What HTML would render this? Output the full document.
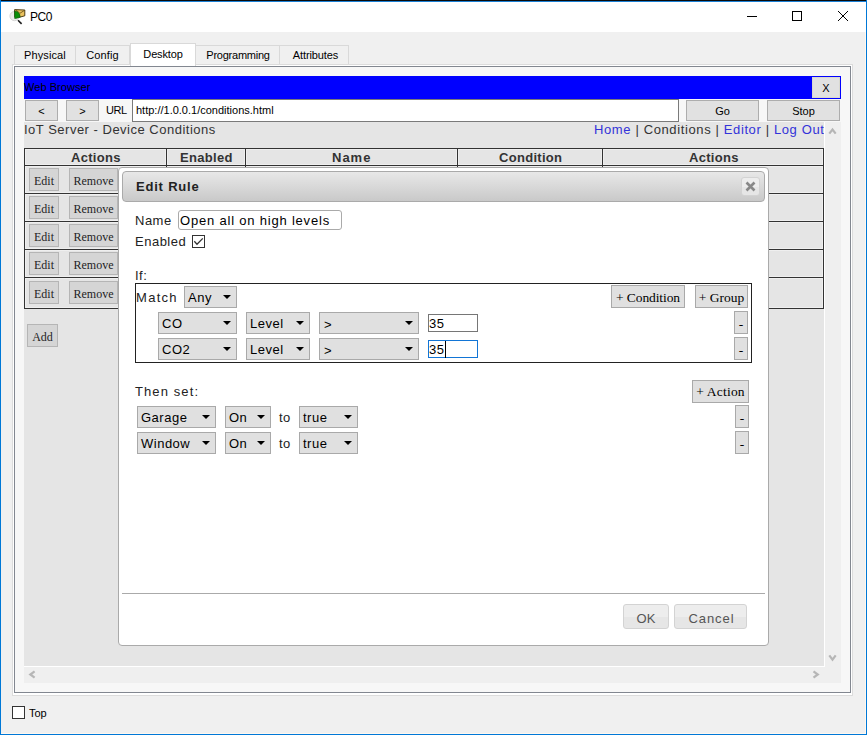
<!DOCTYPE html>
<html><head><meta charset="utf-8">
<style>
*{margin:0;padding:0;box-sizing:border-box}
html,body{width:867px;height:735px;overflow:hidden;background:#f0f0f0}
body{position:relative;font-family:"Liberation Sans",sans-serif;color:#000}
.a{position:absolute}
.t{position:absolute;white-space:nowrap;line-height:1}
.tab{position:absolute;top:45px;height:20px;border:1px solid #d9d9d9;border-bottom:none;background:#f0f0f0;font-size:11px;line-height:18px;text-align:center;letter-spacing:0.1px}
.wbtn{position:absolute;background:#e1e1e1;border:1px solid #adadad;font-size:11px;text-align:center;line-height:19px}
.ebtn{position:absolute;background:#d5d5d5;border:1px solid #b5b5b5;font-family:"Liberation Serif",serif;font-size:12px;text-align:center;color:#1e1e1e}
.sel{position:absolute;background:#e0e0e0;border:1px solid #a9a9a9;font-size:13px;color:#000}
.sel span{position:absolute;left:3px;top:3px;line-height:16px;letter-spacing:0.5px}
.sel i{position:absolute;right:5px;top:8px;width:0;height:0;border-left:4px solid transparent;border-right:4px solid transparent;border-top:4px solid #000}
.pbtn{position:absolute;background:#e0e0e0;border:1px solid #a9a9a9;font-family:"Liberation Serif",serif;font-size:13.5px;color:#000;text-align:center}
.hdr{font-size:13px;font-weight:bold;color:#333;letter-spacing:0.3px}
.lbl{position:absolute;font-size:13px;color:#222;white-space:nowrap;line-height:13px}
.uibtn{position:absolute;border:1px solid #d3d3d3;border-radius:3px;background:linear-gradient(#ededed 0,#ededed 50%,#e6e6e6 50%,#e6e6e6 100%);color:#555;font-size:13px;text-align:center}
</style></head><body>
<!-- window frame -->
<div class="a" style="left:0;top:0;width:867px;height:1px;background:#0a0a0a"></div>
<div class="a" style="left:0;top:1px;width:867px;height:1px;background:#1a7fd4"></div>
<div class="a" style="left:0;top:0;width:1px;height:735px;background:#0078d7"></div>
<div class="a" style="left:866px;top:0;width:1px;height:735px;background:#0078d7"></div>
<div class="a" style="left:0;top:734px;width:867px;height:1px;background:#0078d7"></div>
<div class="a" style="left:1px;top:2px;width:865px;height:30px;background:#fff"></div>
<div class="a" style="left:865px;top:32px;width:1px;height:702px;background:#fff8f0"></div>
<div class="a" style="left:1px;top:733px;width:865px;height:1px;background:#fff8f0"></div>

<!-- icon -->
<svg class="a" style="left:5px;top:5px" width="22" height="22" viewBox="4.4 4.5 22 22">
  <circle cx="13.9" cy="15.6" r="4.6" fill="#ededed" stroke="#d2d2d2" stroke-width="0.9"/>
  <line x1="17.4" y1="19.7" x2="21" y2="23.4" stroke="#1e1e1e" stroke-width="1.6"/>
  <path d="M14 9.1 L24.2 9.5 L24.2 15.3 L19.4 16.6 L14.3 16.6 Z" fill="#ebc35f" stroke="#3d2e08" stroke-width="0.9"/>
  <path d="M15.5 9.6 L19.3 12.8 L23.8 9.9" fill="none" stroke="#5e4712" stroke-width="0.8"/>
  <path d="M14 10.4 L16.8 11.3 Q19.7 12.8 19.6 16.8 L15.2 18 L14 17.9 Z" fill="#0a8f0a" stroke="#054a05" stroke-width="0.5"/>
</svg>
<div class="t" style="left:30px;top:11px;font-size:12px;letter-spacing:-0.4px">PC0</div>

<!-- window controls -->
<div class="a" style="left:747px;top:16px;width:10px;height:1px;background:#000"></div>
<div class="a" style="left:792px;top:11px;width:10px;height:10px;border:1px solid #000"></div>
<svg class="a" style="left:837px;top:10px" width="12" height="12" viewBox="0 0 12 12"><path d="M1 1 L11 11 M11 1 L1 11" stroke="#000" stroke-width="1"/></svg>

<!-- tabs -->
<div class="tab" style="left:14px;width:62px">Physical</div>
<div class="tab" style="left:75px;width:55px">Config</div>
<div class="tab" style="left:279px;width:70px;text-indent:3px;letter-spacing:-0.1px">Attributes</div>
<div class="tab" style="left:195px;width:85px;letter-spacing:-0.25px;text-indent:1px">Programming</div>
<div class="tab" style="left:130px;top:43px;width:66px;height:23px;background:#fff;line-height:21px;letter-spacing:-0.15px;z-index:2">Desktop</div>

<!-- panel -->
<div class="a" style="left:12px;top:64px;width:841px;height:632px;border:1px solid #dcdcdc;background:#fff"></div>
<div class="a" style="left:14px;top:66px;width:837px;height:627px;border:1px solid #828790;background:#f7f7f7"></div>

<!-- browser title -->
<div class="a" style="left:24px;top:76px;width:817px;height:23px;background:#0000ff"></div>
<div class="t" style="left:24px;top:82px;font-size:11px;letter-spacing:0.05px">Web Browser</div>
<div class="wbtn" style="left:812px;top:77px;width:28px;height:21px;border-color:#d9d9cf;font-size:11px;line-height:21px">X</div>

<!-- nav row -->
<div class="wbtn" style="left:25px;top:100px;width:33px;height:21px;line-height:21px">&lt;</div>
<div class="wbtn" style="left:66px;top:100px;width:33px;height:21px;line-height:21px">&gt;</div>
<div class="t" style="left:106px;top:105px;font-size:11px;letter-spacing:-0.5px">URL</div>
<div class="a" style="left:132px;top:99px;width:547px;height:23px;background:#fff;border:1px solid #7a7a7a"></div>
<div class="t" style="left:136px;top:105px;font-size:11px">http://1.0.0.1/conditions.html</div>
<div class="wbtn" style="left:686px;top:100px;width:73px;height:21px;line-height:21px">Go</div>
<div class="wbtn" style="left:767px;top:100px;width:73px;height:21px;line-height:21px">Stop</div>

<!-- page content -->
<div class="a" style="left:24px;top:122px;width:800px;height:544px;background:#e5e5e5;overflow:hidden">
</div>

<!-- page header -->
<div class="t" style="left:24px;top:123px;font-size:13px;color:#333;letter-spacing:0.5px">IoT Server - Device Conditions</div>
<div class="t" style="left:594px;top:123px;font-size:13px;color:#333;letter-spacing:0.62px"><span style="color:#3333d9">Home</span> | Conditions | <span style="color:#3333d9">Editor</span> | <span style="color:#3333d9">Log Out</span></div>

<!-- table light lines -->
<div class="a" style="left:25px;top:149px;width:141px;height:16px;border:1px solid #efefef"></div>
<div class="a" style="left:167px;top:149px;width:78px;height:16px;border:1px solid #efefef"></div>
<div class="a" style="left:246px;top:149px;width:211px;height:16px;border:1px solid #efefef"></div>
<div class="a" style="left:458px;top:149px;width:144px;height:16px;border:1px solid #efefef"></div>
<div class="a" style="left:603px;top:149px;width:220px;height:16px;border:1px solid #efefef"></div>
<div class="a" style="left:25px;top:166px;width:798px;height:27px;border:1px solid #efefef"></div>
<div class="a" style="left:25px;top:194px;width:798px;height:27px;border:1px solid #efefef"></div>
<div class="a" style="left:25px;top:222px;width:798px;height:27px;border:1px solid #efefef"></div>
<div class="a" style="left:25px;top:250px;width:798px;height:27px;border:1px solid #efefef"></div>
<div class="a" style="left:25px;top:278px;width:798px;height:30px;border:1px solid #efefef"></div>
<!-- table -->
<div class="a" style="left:24px;top:148px;width:800px;height:161px;border:1px solid #333"></div>
<div class="a" style="left:24px;top:165px;width:800px;height:1px;background:#333"></div>
<div class="a" style="left:24px;top:193px;width:800px;height:1px;background:#333"></div>
<div class="a" style="left:24px;top:221px;width:800px;height:1px;background:#333"></div>
<div class="a" style="left:24px;top:249px;width:800px;height:1px;background:#333"></div>
<div class="a" style="left:24px;top:277px;width:800px;height:1px;background:#333"></div>
<div class="a" style="left:166px;top:148px;width:1px;height:19px;background:#333"></div>
<div class="a" style="left:245px;top:148px;width:1px;height:19px;background:#333"></div>
<div class="a" style="left:457px;top:148px;width:1px;height:19px;background:#333"></div>
<div class="a" style="left:602px;top:148px;width:1px;height:19px;background:#333"></div>
<div class="t hdr" style="left:71px;top:151px">Actions</div>
<div class="t hdr" style="left:180px;top:151px">Enabled</div>
<div class="t hdr" style="left:332px;top:151px;letter-spacing:1px">Name</div>
<div class="t hdr" style="left:499px;top:151px">Condition</div>
<div class="t hdr" style="left:689px;top:151px">Actions</div>
<div class="ebtn" style="left:29px;top:168px;width:30px;height:23px;line-height:24px">Edit</div>
<div class="ebtn" style="left:69px;top:168px;width:49px;height:23px;line-height:24px">Remove</div>
<div class="ebtn" style="left:29px;top:196px;width:30px;height:23px;line-height:24px">Edit</div>
<div class="ebtn" style="left:69px;top:196px;width:49px;height:23px;line-height:24px">Remove</div>
<div class="ebtn" style="left:29px;top:224px;width:30px;height:23px;line-height:24px">Edit</div>
<div class="ebtn" style="left:69px;top:224px;width:49px;height:23px;line-height:24px">Remove</div>
<div class="ebtn" style="left:29px;top:252px;width:30px;height:23px;line-height:24px">Edit</div>
<div class="ebtn" style="left:69px;top:252px;width:49px;height:23px;line-height:24px">Remove</div>
<div class="ebtn" style="left:29px;top:281px;width:30px;height:23px;line-height:24px">Edit</div>
<div class="ebtn" style="left:69px;top:281px;width:49px;height:23px;line-height:24px">Remove</div>
<div class="ebtn" style="left:27px;top:324px;width:31px;height:23px;line-height:24px">Add</div>

<!-- dialog -->
<div class="a" style="left:118px;top:167px;width:651px;height:479px;border:1px solid #aaa;border-radius:4px;background:#fff"></div>
<div class="a" style="left:122px;top:171px;width:643px;height:31px;border:1px solid #aaa;border-radius:4px;background:linear-gradient(#e8e8e8,#c9c9c9)"></div>
<div class="t" style="left:136px;top:180px;font-size:13px;font-weight:bold;color:#222;letter-spacing:0.8px">Edit Rule</div>
<div class="a" style="left:741px;top:177px;width:19px;height:19px;border:1px solid #d3d3d3;border-radius:3px;background:linear-gradient(#ededed 50%,#e6e6e6 50%)"></div>
<svg class="a" style="left:745px;top:181px" width="11" height="11" viewBox="0 0 11 11"><path d="M1.5 1.5 L9.5 9.5 M9.5 1.5 L1.5 9.5" stroke="#888" stroke-width="2.6"/></svg>

<div class="lbl" style="left:135px;top:214px;letter-spacing:0.5px">Name</div>
<div class="a" style="left:178px;top:210px;width:164px;height:20px;border:1px solid #aaa;border-radius:3px;background:#fff"></div>
<div class="lbl" style="left:180px;top:214px;color:#000;letter-spacing:0.8px">Open all on high levels</div>
<div class="lbl" style="left:135px;top:235px;letter-spacing:0.5px">Enabled</div>
<div class="a" style="left:192px;top:235px;width:13px;height:13px;border:1px solid #333;background:#fff"></div>
<svg class="a" style="left:192px;top:235px" width="13" height="13" viewBox="0 0 13 13"><path d="M2.3 6.3 L5 9.2 L10.8 3.4" stroke="#333" stroke-width="1.3" fill="none"/></svg>

<div class="lbl" style="left:135px;top:269px;letter-spacing:0.5px">If:</div>
<div class="a" style="left:135px;top:283px;width:617px;height:80px;border:1px solid #222"></div>
<div class="lbl" style="left:136px;top:291px;letter-spacing:1.3px">Match</div>
<div class="sel" style="left:184px;top:286px;width:53px;height:22px"><span>Any</span><i></i></div>
<div class="pbtn" style="left:611px;top:285px;width:74px;height:23px;line-height:24px;letter-spacing:-0.1px">+ Condition</div>
<div class="pbtn" style="left:695px;top:285px;width:53px;height:23px;line-height:24px">+ Group</div>
<div class="sel" style="left:158px;top:312px;width:79px;height:22px"><span>CO</span><i></i></div>
<div class="sel" style="left:246px;top:312px;width:64px;height:22px"><span>Level</span><i></i></div>
<div class="sel" style="left:319px;top:312px;width:100px;height:22px"><span style="left:4px;top:4px">&gt;</span><i></i></div>
<div class="pbtn" style="left:734px;top:311px;width:14px;height:23px;line-height:25px">-</div>
<div class="sel" style="left:158px;top:338px;width:79px;height:22px"><span>CO2</span><i></i></div>
<div class="sel" style="left:246px;top:338px;width:64px;height:22px"><span>Level</span><i></i></div>
<div class="sel" style="left:319px;top:338px;width:100px;height:22px"><span style="left:4px;top:4px">&gt;</span><i></i></div>
<div class="pbtn" style="left:734px;top:337px;width:14px;height:23px;line-height:25px">-</div>
<div class="a" style="left:428px;top:314px;width:50px;height:18px;border:1px solid #767676;background:#fff"></div>
<div class="lbl" style="left:429px;top:317px;color:#000;letter-spacing:0.5px">35</div>
<div class="a" style="left:428px;top:340px;width:50px;height:18px;border:1px solid #1275d6;background:#fff"></div>
<div class="lbl" style="left:429px;top:343px;color:#000;letter-spacing:0.5px">35</div>
<div class="a" style="left:445px;top:341px;width:1px;height:17px;background:#000"></div>

<div class="lbl" style="left:135px;top:385px;letter-spacing:1.1px">Then set:</div>
<div class="pbtn" style="left:692px;top:380px;width:57px;height:23px;line-height:22px;letter-spacing:0.2px">+ Action</div>
<div class="sel" style="left:137px;top:406px;width:79px;height:22px"><span>Garage</span><i></i></div>
<div class="sel" style="left:225px;top:406px;width:46px;height:22px"><span>On</span><i></i></div>
<div class="lbl" style="left:279px;top:411px;letter-spacing:0.5px">to</div>
<div class="sel" style="left:299px;top:406px;width:59px;height:22px"><span>true</span><i></i></div>
<div class="pbtn" style="left:735px;top:405px;width:14px;height:23px;line-height:25px">-</div>
<div class="sel" style="left:137px;top:432px;width:79px;height:22px"><span>Window</span><i></i></div>
<div class="sel" style="left:225px;top:432px;width:46px;height:22px"><span>On</span><i></i></div>
<div class="lbl" style="left:279px;top:437px;letter-spacing:0.5px">to</div>
<div class="sel" style="left:299px;top:432px;width:59px;height:22px"><span>true</span><i></i></div>
<div class="pbtn" style="left:735px;top:431px;width:14px;height:23px;line-height:25px">-</div>
<div class="a" style="left:122px;top:593px;width:643px;height:1px;background:#aaa"></div>
<div class="uibtn" style="left:623px;top:604px;width:46px;height:25px;line-height:27px">OK</div>
<div class="uibtn" style="left:674px;top:604px;width:73px;height:25px;line-height:27px;letter-spacing:0.9px;text-indent:2px">Cancel</div>
<div class="a" style="left:12px;top:706px;width:13px;height:13px;border:1px solid #333;background:#fff"></div>
<div class="t" style="left:29px;top:708px;font-size:11px">Top</div>
<!-- scrollbars -->
<div class="a" style="left:824px;top:122px;width:1px;height:545px;background:#fff"></div>
<div class="a" style="left:825px;top:122px;width:16px;height:561px;background:#efefef"></div>
<div class="a" style="left:24px;top:666px;width:801px;height:1px;background:#fff"></div>
<div class="a" style="left:24px;top:667px;width:817px;height:16px;background:#efefef"></div>

<svg class="a" style="left:0;top:0" width="867" height="735" viewBox="0 0 867 735">
<g fill="none" stroke="#b6b6b6" stroke-width="2.2">
<path d="M829.3 133.6 L832.5 129.6 L835.7 133.6"/>
<path d="M829.3 655.4 L832.5 659.6 L835.7 655.4"/>
<path d="M813.5 671.3 L817.8 674.5 L813.5 677.7"/>
<path d="M34.6 671.3 L30.3 674.5 L34.6 677.7"/>
</g></svg>
</body></html>
